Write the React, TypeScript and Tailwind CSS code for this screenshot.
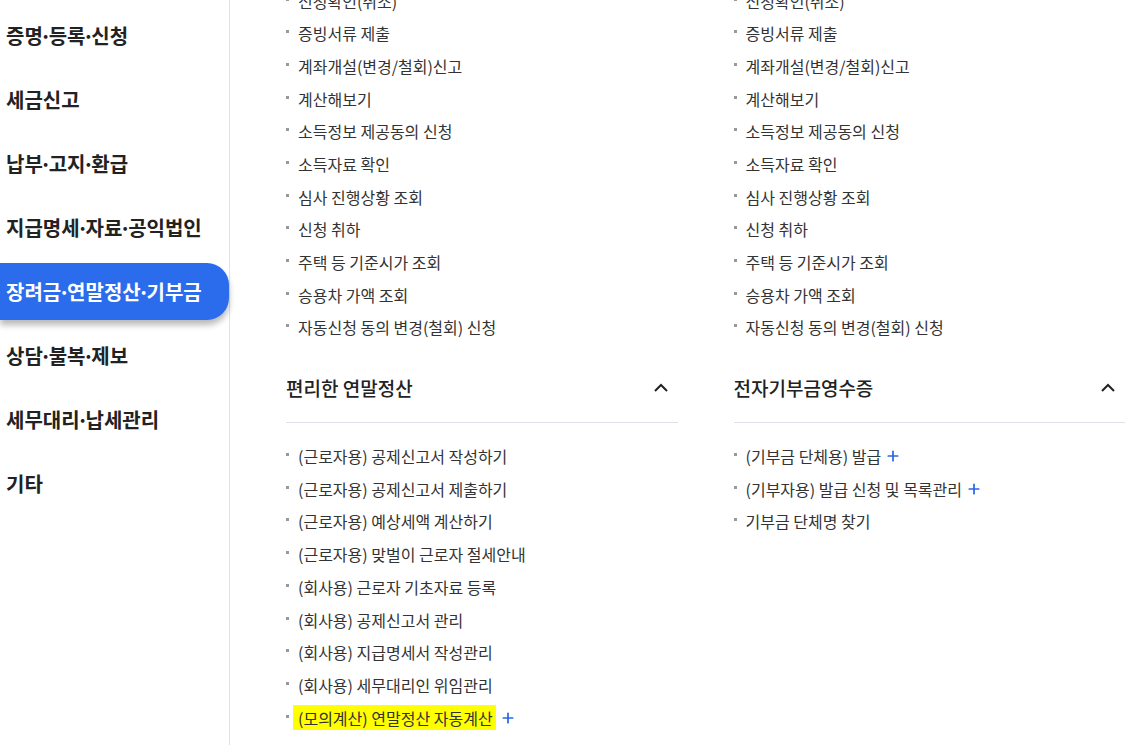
import { Plus } from 'lucide-react'

const navItems = [
  '증명·등록·신청',
  '세금신고',
  '납부·고지·환급',
  '지급명세·자료·공익법인',
  '장려금·연말정산·기부금',
  '상담·불복·제보',
  '세무대리·납세관리',
  '기타',
]

const commonLinks = [
  '신청확인(취소)',
  '증빙서류 제출',
  '계좌개설(변경/철회)신고',
  '계산해보기',
  '소득정보 제공동의 신청',
  '소득자료 확인',
  '심사 진행상황 조회',
  '신청 취하',
  '주택 등 기준시가 조회',
  '승용차 가액 조회',
  '자동신청 동의 변경(철회) 신청',
]

type Link = { label: string; plus?: boolean; mark?: boolean }

const yearEnd: Link[] = [
  { label: '(근로자용) 공제신고서 작성하기' },
  { label: '(근로자용) 공제신고서 제출하기' },
  { label: '(근로자용) 예상세액 계산하기' },
  { label: '(근로자용) 맞벌이 근로자 절세안내' },
  { label: '(회사용) 근로자 기초자료 등록' },
  { label: '(회사용) 공제신고서 관리' },
  { label: '(회사용) 지급명세서 작성관리' },
  { label: '(회사용) 세무대리인 위임관리' },
  { label: '(모의계산) 연말정산 자동계산', plus: true, mark: true },
]

const donation: Link[] = [
  { label: '(기부금 단체용) 발급', plus: true },
  { label: '(기부자용) 발급 신청 및 목록관리', plus: true },
  { label: '기부금 단체명 찾기' },
]

// tighten the space around the middle dots in menu labels
function NavLabel({ text }: { text: string }) {
  const chars = Array.from(text)
  return (
    <>
      {chars.map((c, i) =>
        c === '·' || chars[i + 1] === '·' ? (
          <span key={i} className="tracking-[-3px]">{c}</span>
        ) : (
          <span key={i}>{c}</span>
        )
      )}
    </>
  )
}

function LinkList({ items }: { items: Link[] }) {
  return (
    <ul>
      {items.map((it) => (
        <li key={it.label} className="flex items-center h-[32.7px] text-[16px] text-[#333]">
          <span className="w-[3px] h-[3px] bg-[#999] mb-[3px] shrink-0" />
          {it.mark ? (
            <span className="ml-[4px] pl-[5px] pr-[3px] h-[25px] flex items-center bg-[#ffff00]">{it.label}</span>
          ) : (
            <span className="ml-[9px]">{it.label}</span>
          )}
          {it.plus && <Plus size={16} strokeWidth={2.6} className="ml-[4px] text-[#2767e6]" />}
        </li>
      ))}
    </ul>
  )
}

function Chevron() {
  return (
    <svg width="16" height="10" viewBox="0 0 16 10" className="mr-[9px]">
      <polyline points="2,8 8,2 14,8" fill="none" stroke="#222" strokeWidth="2" />
    </svg>
  )
}

function Column({ title, items }: { title: string; items: Link[] }) {
  return (
    <div>
      <LinkList items={commonLinks.map((label) => ({ label }))} />
      <div className="mt-[22px] h-[57px] pb-[12px] flex items-center justify-between border-b border-[#e1e0e8]">
        <span className="text-[19px] font-medium text-[#222]">{title}</span>
        <Chevron />
      </div>
      <div className="pt-[17px]">
        <LinkList items={items} />
      </div>
    </div>
  )
}

export default function App() {
  return (
    <div
      className="w-[1130px] h-[745px] overflow-hidden bg-white flex"
      style={{ fontFamily: '"Noto Sans CJK KR", "Noto Sans", sans-serif' }}
    >
      <aside className="w-[230px] shrink-0 border-r border-[#e4dff7] flex flex-col gap-[7px] pt-[7px]">
        {navItems.map((n) => {
          const active = n === '장려금·연말정산·기부금'
          return (
            <div
              key={n}
              className={
                active
                  ? 'h-[57px] flex items-center pl-[6px] text-[20px] font-bold text-white bg-[#2a6cec] rounded-r-[22px] shadow-[0_5px_6px_rgba(0,0,0,0.28)]'
                  : 'h-[57px] flex items-center pl-[6px] text-[20px] font-bold text-[#222]'
              }
            >
              <NavLabel text={n} />
            </div>
          )
        })}
      </aside>
      <main className="flex-1 grid grid-cols-2 gap-x-[56px] pl-[56px] pr-[5px] -mt-[15.8px] items-start">
        <Column title="편리한 연말정산" items={yearEnd} />
        <Column title="전자기부금영수증" items={donation} />
      </main>
    </div>
  )
}
